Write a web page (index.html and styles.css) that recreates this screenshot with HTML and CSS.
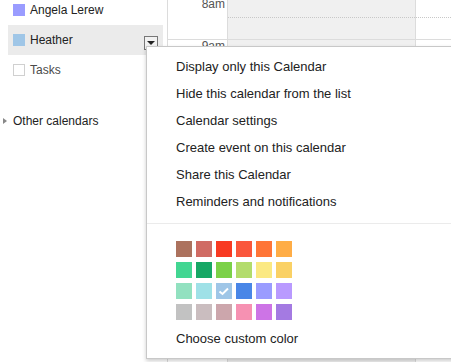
FILE: index.html
```html
<!DOCTYPE html>
<html>
<head>
<meta charset="utf-8">
<link rel="stylesheet" href="styles.css">
</head>
<body>
<div class="app">
  <aside class="sidebar">
    <div class="cal-row"><span class="swatch c-purple"></span><span class="name">Angela Lerew</span></div>
    <div class="cal-row active"><span class="swatch c-blue"></span><span class="name">Heather</span><span class="dd-btn"><span class="dd-tri"></span></span></div>
    <div class="cal-row tasks"><span class="swatch c-empty"></span><span class="name">Tasks</span></div>
    <div class="other"><span class="tri"></span><span>Other calendars</span></div>
  </aside>
  <main class="grid">
    <div class="hour"><div class="time">8am</div><div class="day today"><div class="half"></div></div><div class="day"><div class="half"></div></div></div>
    <div class="hour"><div class="time">9am</div><div class="day today"><div class="half"></div></div><div class="day"><div class="half"></div></div></div>
    <div class="hour"><div class="time"></div><div class="day today"><div class="half"></div></div><div class="day"><div class="half"></div></div></div>
    <div class="hour"><div class="time"></div><div class="day today"><div class="half"></div></div><div class="day"><div class="half"></div></div></div>
    <div class="hour"><div class="time"></div><div class="day today"><div class="half"></div></div><div class="day"><div class="half"></div></div></div>
    <div class="hour"><div class="time"></div><div class="day today"><div class="half"></div></div><div class="day"><div class="half"></div></div></div>
    <div class="hour"><div class="time"></div><div class="day today"><div class="half"></div></div><div class="day"><div class="half"></div></div></div>
    <div class="hour"><div class="time"></div><div class="day today"><div class="half"></div></div><div class="day"><div class="half"></div></div></div>
    <div class="hour"><div class="time"></div><div class="day today"><div class="half"></div></div><div class="day"><div class="half"></div></div></div>
  </main>
  <div class="menu">
    <div class="item">Display only this Calendar</div>
    <div class="item">Hide this calendar from the list</div>
    <div class="item">Calendar settings</div>
    <div class="item">Create event on this calendar</div>
    <div class="item">Share this Calendar</div>
    <div class="item">Reminders and notifications</div>
    <div class="sep"></div>
    <div class="palette">
      <span class="chip" style="background:#ac725e"></span>
      <span class="chip" style="background:#d06b64"></span>
      <span class="chip" style="background:#f83a22"></span>
      <span class="chip" style="background:#fa573c"></span>
      <span class="chip" style="background:#ff7537"></span>
      <span class="chip" style="background:#ffad46"></span>
      <span class="chip" style="background:#42d692"></span>
      <span class="chip" style="background:#16a765"></span>
      <span class="chip" style="background:#7bd148"></span>
      <span class="chip" style="background:#b3dc6c"></span>
      <span class="chip" style="background:#fbe983"></span>
      <span class="chip" style="background:#fad165"></span>
      <span class="chip" style="background:#92e1c0"></span>
      <span class="chip" style="background:#9fe1e7"></span>
      <span class="chip" style="background:#9fc6e7"><svg class="check" width="16" height="16" viewBox="0 0 16 16"><polyline points="3.5,8.5 6.5,11 12,5.5" fill="none" stroke="#fff" stroke-width="2"/></svg></span>
      <span class="chip" style="background:#4986e7"></span>
      <span class="chip" style="background:#9a9cff"></span>
      <span class="chip" style="background:#b99aff"></span>
      <span class="chip" style="background:#c2c2c2"></span>
      <span class="chip" style="background:#cabdbf"></span>
      <span class="chip" style="background:#cca6ac"></span>
      <span class="chip" style="background:#f691b2"></span>
      <span class="chip" style="background:#cd74e6"></span>
      <span class="chip" style="background:#a47ae2"></span>
    </div>
    <div class="item custom">Choose custom color</div>
  </div>
</div>
</body>
</html>
```

FILE: styles.css
```css
* { box-sizing: border-box; }
html, body {
  margin: 0;
  padding: 0;
  background: #fff;
  overflow: hidden;
}
body {
  font-family: "Liberation Sans", Arial, sans-serif;
  color: #222;
  width: 451px;
  height: 362px;
}
.app {
  position: relative;
  display: flex;
  width: 451px;
  height: 362px;
  overflow: hidden;
}
.sidebar {
  width: 167px;
  flex: none;
  display: flex;
  flex-direction: column;
  margin-top: -5px;
  font-size: 12px;
}
.cal-row {
  display: flex;
  align-items: center;
  height: 30px;
  margin-left: 8px;
  width: 155px;
  padding-left: 5px;
  gap: 5px;
}
.cal-row.active {
  background: #ebebeb;
}
.swatch {
  width: 12px;
  height: 12px;
  flex: none;
}
.c-purple { background: #9a9cff; }
.c-blue { background: #9fc6e7; }
.c-empty { background: #fff; border: 1px solid #d0d0d0; }
.tasks .name { color: #4a4a4a; }
.name { flex: 1; }
.dd-btn {
  width: 14px;
  height: 14px;
  margin-right: 5px;
  margin-top: 5px;
  border: 1px solid #777;
  background: #f1f1f1;
  display: flex;
  align-items: center;
  justify-content: center;
}
.dd-tri {
  width: 0;
  height: 0;
  border-left: 4px solid transparent;
  border-right: 4px solid transparent;
  border-top: 4px solid #222;
  margin-top: 1px;
}
.other {
  display: flex;
  align-items: center;
  height: 20px;
  margin-top: 26px;
  padding-left: 3px;
  gap: 6px;
  font-size: 12px;
  color: #222;
}
.tri {
  width: 0;
  height: 0;
  border-top: 3px solid transparent;
  border-bottom: 3px solid transparent;
  border-left: 4px solid #888;
}
.grid {
  flex: 1;
  border-left: 1px solid #dcdcdc;
  margin-top: -2px;
  display: flex;
  flex-direction: column;
}
.hour {
  display: grid;
  grid-template-columns: 59px 188px 1fr;
  height: 42px;
  flex: none;
  border-bottom: 1px solid #dcdcdc;
}
.time {
  font-size: 12px;
  line-height: 12px;
  color: #555;
  text-align: right;
  padding-right: 2px;
}
.day {
  border-left: 1px solid #dcdcdc;
}
.day.today {
  background: #f0f0f0;
}
.half {
  height: 20px;
  border-bottom: 1px dotted #c8c8c8;
}
.menu {
  position: absolute;
  left: 146px;
  top: 46px;
  width: 330px;
  background: #fff;
  border: 1px solid #c8c8c8;
  box-shadow: 0 2px 4px rgba(0, 0, 0, 0.2);
  padding: 6px 0 6px 0;
  font-size: 13px;
  color: #222;
}
.item {
  height: 27px;
  line-height: 27px;
  padding-left: 29px;
  white-space: nowrap;
}
.sep {
  height: 1px;
  background: #ebebeb;
  margin: 8px 0 17px 0;
}
.palette {
  display: grid;
  grid-template-columns: repeat(6, 16px);
  column-gap: 4px;
  row-gap: 5px;
  padding-left: 29px;
}
.chip {
  display: block;
  width: 16px;
  height: 16px;
}
.check { display: block; }
.custom {
  margin-top: 5px;
}
```
